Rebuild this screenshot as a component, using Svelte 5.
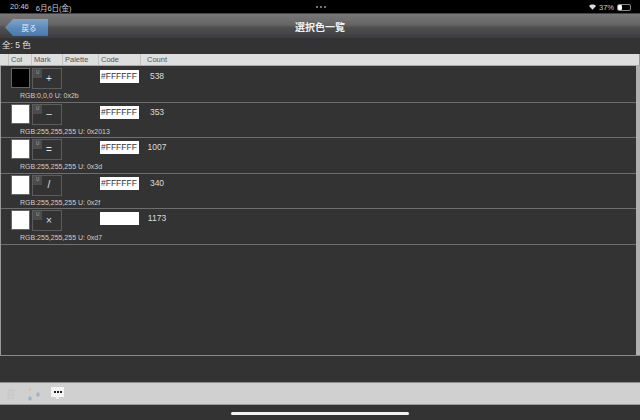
<script>
  const rows = [
    { col: '#000', mark: '+', code: '#FFFFFF', count: '538', info: 'RGB:0,0,0 U: 0x2b' },
    { col: '#fff', mark: '–', code: '#FFFFFF', count: '353', info: 'RGB:255,255,255 U: 0x2013' },
    { col: '#fff', mark: '=', code: '#FFFFFF', count: '1007', info: 'RGB:255,255,255 U: 0x3d' },
    { col: '#fff', mark: '/', code: '#FFFFFF', count: '340', info: 'RGB:255,255,255 U: 0x2f' },
    { col: '#fff', mark: '×', code: '', count: '1173', info: 'RGB:255,255,255 U: 0xd7' }
  ];
  const heads = [['Col', 'h-col'], ['Mark', 'h-mark'], ['Palette', 'h-pal'], ['Code', 'h-code'], ['Count', 'h-count']];
</script>

<div class="screen">
  <div class="status">
    <div class="st-left"><span>20:46</span><span>6月6日(金)</span></div>
    <div class="dots"><i></i><i></i><i></i></div>
    <div class="st-right">
      <svg width="7" height="6" viewBox="0 0 9 7"><path d="M0 2.2C2.6-.3 6.4-.3 9 2.2L4.5 7z" fill="#ddd"/></svg>
      <span>37%</span>
      <div class="batt"><div class="fill"></div></div>
    </div>
  </div>

  <div class="nav">
    <div class="back"><svg class="back-bg" width="43" height="17" viewBox="0 0 43 17"><defs><linearGradient id="bk" x1="0" y1="0" x2="0" y2="1"><stop offset="0" stop-color="#7ea4cc"/><stop offset="0.5" stop-color="#5f8bbb"/><stop offset="1" stop-color="#4a78aa"/></linearGradient></defs><path d="M0 8.5L8 0H43V17H8z" fill="url(#bk)"/></svg><span>戻る</span></div>
    <div class="title">選択色一覧</div>
  </div>

  <div class="summary">全: 5 色</div>

  <div class="head">
    {#each heads as [label, cls]}
      <div class="hc {cls}">{label}</div>
    {/each}
  </div>

  <div class="list">
    <div class="rows">
      {#each rows as r}
        <div class="row">
          <div class="top">
            <div class="swatch" style:background={r.col}></div>
            <div class="mark"><span class="mini">U</span><span class="glyph">{r.mark}</span></div>
            <div class="code">{r.code}</div>
            <div class="count">{r.count}</div>
          </div>
          <div class="info">{r.info}</div>
        </div>
      {/each}
    </div>
    <div class="scroll"></div>
  </div>

  <div class="gap"></div>

  <div class="toolbar">
    <svg class="trash" width="8" height="10" viewBox="0 0 9 12"><path d="M0 1.5H9M1 2.5V11.5H8V2.5M3 .5H6M3 4V10M6 4V10" fill="none" stroke="#c4c4c4" stroke-width="1"/></svg>
    <svg class="share" width="16" height="14" viewBox="0 0 16 14"><circle cx="5" cy="2.5" r="1.6" fill="#d8bfb4"/><rect x="11.5" y="5.5" width="3" height="4" rx="1" fill="#9fb0d0"/><rect x="3.5" y="9.5" width="3" height="4" rx="1" fill="#9fb0d0"/></svg>
    <div class="more"><span class="ddd"><i></i><i></i><i></i></span><span class="tail"></span></div>
  </div>

  <div class="bottom"><div class="home"></div></div>
</div>

<style>
  :global(body) { margin: 0; background: #333; }
  .screen {
    width: 640px; height: 420px; display: flex; flex-direction: column; overflow: hidden;
    background: #333; color: #e6e6e6;
    font-family: "Liberation Sans", "Noto Sans CJK JP", sans-serif;
  }
  .status {
    height: 13px; flex: none; background: #000; display: flex; align-items: center;
    justify-content: space-between; font-size: 7.5px; color: #ccc; padding: 1px 9px 0 10px; box-sizing: border-box;
  }
  .st-left { display: flex; gap: 7px; width: 100px; }
  .dots { display: flex; gap: 2px; }
  .dots i { width: 2px; height: 2px; border-radius: 50%; background: #999; }
  .st-right { display: flex; align-items: center; gap: 3px; width: 100px; justify-content: flex-end; }
  .batt { width: 14px; height: 7px; border: 1px solid #888; border-radius: 2px; box-sizing: border-box; display: flex; }
  .fill { width: 4px; background: #fff; border-radius: 1px; }
  .nav {
    height: 25px; flex: none; position: relative; display: flex; align-items: center; justify-content: center;
    background: linear-gradient(#777 0, #656565 45%, #505050 55%, #3b3d40 100%);
    border-top: 1px solid #444; box-sizing: border-box;
  }
  .title { font-size: 10px; color: #f2f2f2; font-weight: 700; }
  .back { position: absolute; left: 5px; top: 5px; width: 43px; height: 17px; display: flex; align-items: center; justify-content: center; }
  .back-bg { position: absolute; inset: 0; }
  .back span { position: relative; font-size: 7.5px; color: #e8eef6; padding-left: 5px; }
  .summary { height: 16px; flex: none; font-size: 8.5px; line-height: 15px; padding-left: 2px; color: #e0e0e0; background: #333; }
  .head {
    height: 12px; flex: none; display: flex; background: #dedede; color: #555; font-size: 7.5px; line-height: 12px;
    border-right: 1px solid #999; border-bottom: 1px solid #aaa; box-sizing: border-box;
  }
  .hc { border-left: 1px solid #c4c4c4; box-sizing: border-box; padding-left: 2px; }
  .h-col { margin-left: 8px; width: 23px; }
  .h-mark { width: 31px; }
  .h-pal { width: 36px; }
  .h-code { width: 42px; }
  .h-count { flex: 1; padding-left: 6px; }
  .list { height: 290px; flex: none; display: flex; border-left: 1px solid #999; border-bottom: 1px solid #8a8a8a; box-sizing: border-box; }
  .rows { flex: 1; padding-top: 1px; }
  .scroll { width: 4px; background: #b0b0b0; }
  .row { height: 35.5px; border-bottom: 1px solid #6e6e6e; box-sizing: border-box; }
  .top { display: flex; align-items: flex-start; height: 24px; padding-top: 1px; box-sizing: border-box; }
  .swatch { width: 19px; height: 20px; margin-left: 10px; border: 1px solid #666; box-sizing: border-box; }
  .mark { width: 30px; height: 21px; margin-left: 2px; border: 1px solid #5c5c5c; box-sizing: border-box; position: relative; display: flex; align-items: center; justify-content: center; }
  .mini { position: absolute; left: 0; top: 0; width: 9px; height: 9px; background: #4c4c4c; color: #aaa; font-size: 4.5px; line-height: 7px; text-align: center; }
  .glyph { font-size: 10px; color: #e4e4e4; padding-left: 4px; line-height: 1; }
  .code { width: 39px; height: 13px; margin-left: 38px; margin-top: 2px; background: #fff; color: #333; font-size: 8.5px; line-height: 12px; padding-left: 1px; box-sizing: border-box; }
  .count { width: 36px; text-align: center; margin-top: 2px; font-size: 8.5px; line-height: 13px; color: #ddd; }
  .info { font-size: 7px; line-height: 10px; padding-left: 19px; color: #cfcfcf; }
  .gap { height: 26px; flex: none; background: #333; }
  .toolbar {
    height: 23px; flex: none; background: #d0d0d0; border-top: 1px solid #8e8e8e; border-bottom: 1px solid #999; box-sizing: border-box;
    display: flex; align-items: center; padding-left: 7px;
  }
  .trash { margin-right: 10px; }
  .share { margin-right: 10px; }
  .more { width: 13px; height: 10px; background: #f4f4f4; margin-top: -3px; position: relative; display: flex; align-items: center; justify-content: center; }
  .ddd { display: flex; gap: 1px; }
  .ddd i { width: 2px; height: 2px; background: #222; }
  .tail { position: absolute; left: 5px; bottom: -2px; width: 3px; height: 2px; background: #eee; }
  .bottom { flex: 1; background: #333; display: flex; justify-content: center; align-items: flex-start; padding-top: 7px; }
  .home { width: 178px; height: 3px; border-radius: 2px; background: #f2f2f2; }
</style>
